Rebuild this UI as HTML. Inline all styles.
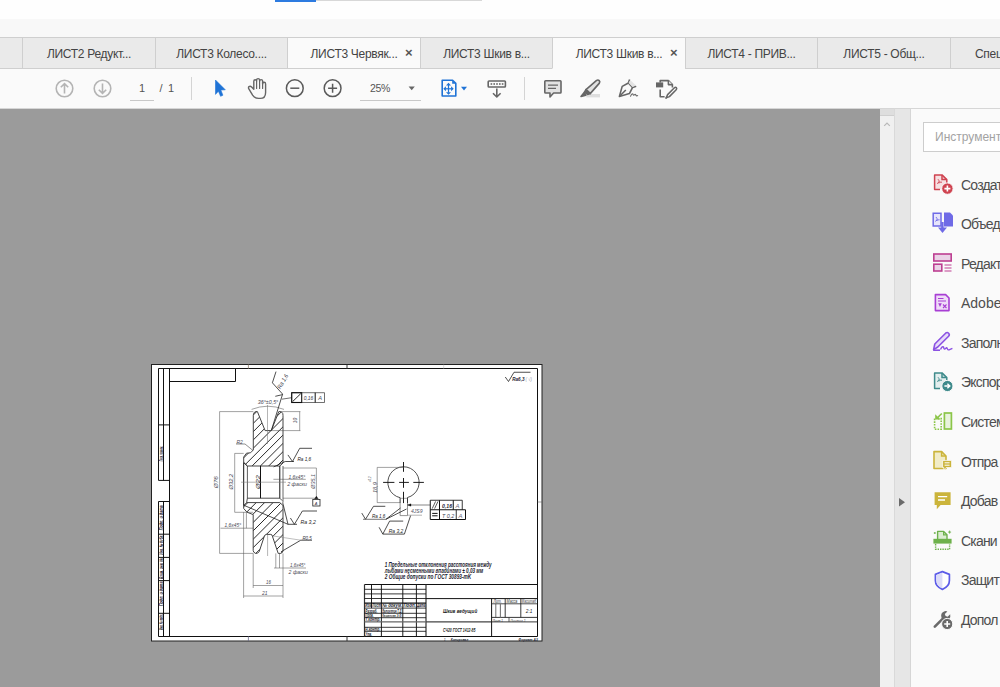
<!DOCTYPE html>
<html><head><meta charset="utf-8">
<style>
*{margin:0;padding:0;box-sizing:border-box}
html,body{width:1000px;height:687px;overflow:hidden;background:#fafafa;font-family:"Liberation Sans",sans-serif;position:relative}
.a{position:absolute}
#topbar{left:0;top:0;width:1000px;height:37px;background:linear-gradient(#fefefe 0,#fefefe 19px,#f8f8f8 19px,#f8f8f8 37px)}
#tabs{left:0;top:37px;width:1000px;height:32px;background:#eaeaea;border-top:1px solid #cfcfcf;border-bottom:1px solid #cfcfcf}
.tab{position:absolute;top:37px;height:32px;letter-spacing:-0.3px;border-left:1px solid #cfcfcf;border-top:1px solid #cfcfcf;border-bottom:1px solid #cfcfcf;background:#eaeaea;font-size:12px;color:#444;line-height:32px;text-align:center;white-space:nowrap;overflow:hidden}
.tab.w{background:#fafafa}
.tab.act{background:#fafafa;border-bottom-color:#fafafa}
.x{position:absolute;top:-1px;font-size:13px;color:#555;font-weight:bold}
#toolbar{left:0;top:69px;width:1000px;height:40px;background:#fafafa}
#doc{left:0;top:108px;width:880px;height:579px;background:#9b9b9b;border-top:1px solid #d6d6d6}
#sb{left:880px;top:108px;width:15px;height:579px;background:#f0f0f0;border-right:1px solid #d9d9d9;border-top:1px solid #d6d6d6}
#div{left:895px;top:108px;width:16px;height:579px;background:#e6e6e6;border-right:1px solid #d6d6d6;border-top:1px solid #d6d6d6}
#pane{left:911px;top:108px;width:89px;height:579px;background:#fafafa;border-top:1px solid #d6d6d6}
.sep{position:absolute;width:1px;background:#d0d0d0}
.lbl{position:absolute;left:961px;font-size:14px;letter-spacing:-0.8px;color:#4e4e4e;white-space:nowrap;line-height:16px}
</style></head><body>
<div class="a" id="topbar"></div>
<div class="a" style="left:275px;top:0;width:41px;height:2px;background:#2d7be0"></div>
<div class="a" style="left:316px;top:0;width:166px;height:1px;background:#d8d8d8"></div>
<div class="a" id="tabs"></div>
<div class="tab" style="left:0;width:22px;border-left:none"></div>
<div class="tab" style="left:22px;width:133px">ЛИСТ2 Редукт...</div>
<div class="tab" style="left:155px;width:132px">ЛИСТ3 Колесо....</div>
<div class="tab w" style="left:287px;width:133px"><span>ЛИСТ3 Червяк...</span><span class="x" style="left:117px">×</span></div>
<div class="tab" style="left:420px;width:132px">ЛИСТ3 Шкив в...</div>
<div class="tab act" style="left:552px;width:133px"><span>ЛИСТ3 Шкив в...</span><span class="x" style="left:117px">×</span></div>
<div class="tab" style="left:685px;width:132px">ЛИСТ4 - ПРИВ...</div>
<div class="tab" style="left:817px;width:133px">ЛИСТ5 - Общ...</div>
<div class="tab" style="left:950px;width:60px;text-align:left;padding-left:24px">Специ</div>

<div class="a" id="toolbar"></div>

<svg class="a" style="left:0;top:0" width="1000" height="108" viewBox="0 0 1000 108">
<g fill="none" stroke="#b4b4b4" stroke-width="1.6">
<circle cx="64.5" cy="88.5" r="8.3"/>
<path d="M64.5 93.5V83.8M60.8 87.3L64.5 83.6L68.2 87.3"/>
<circle cx="102.5" cy="88.5" r="8.3"/>
<path d="M102.5 83.5V93.2M98.8 89.7L102.5 93.4L106.2 89.7"/>
</g>
<rect x="130" y="100" width="24" height="1" fill="#c8c8c8"/>
<rect x="191" y="77" width="1" height="23" fill="#d4d4d4"/>
<path d="M215.5 80L225.3 89.8L220.8 90L222.9 95.2L220.6 96.3L218.4 91.2L215.5 94.4Z" fill="#1f73d6" stroke="#1f73d6" stroke-width="0.6" stroke-linejoin="round"/>
<g fill="none" stroke="#666" stroke-width="1.4" stroke-linejoin="round" stroke-linecap="round">
<path d="M253.8 89.2L251.6 86.9Q250.2 85.6 249 86.6Q248 87.6 249 89.2L252.6 95.2Q254.8 98.4 258.6 98.4L260.2 98.4Q265.6 98.4 265.6 92.4L265.6 84Q265.6 82.3 264.1 82.3Q262.6 82.3 262.6 84L262.6 81Q262.6 79.6 261.1 79.6Q259.6 79.6 259.6 81L259.6 80Q259.6 78.6 258.1 78.6Q256.6 78.6 256.6 80L256.6 81Q256.6 79.8 255.2 79.8Q253.8 79.8 253.8 81.3Z"/>
<path d="M256.6 81V88.5M259.6 80V88.5M262.6 81V88.5" stroke-width="1.2"/>
</g>
<g fill="none" stroke="#5a5a5a" stroke-width="1.5">
<circle cx="294.8" cy="88.2" r="8.4"/>
<path d="M290.3 88.2H299.3"/>
<circle cx="332.6" cy="88.2" r="8.4"/>
<path d="M328.1 88.2H337.1M332.6 83.7V92.7"/>
</g>
<rect x="360" y="100" width="61" height="1" fill="#c8c8c8"/>
<path d="M408.6 86.6H414.8L411.7 90.2Z" fill="#666"/>
<g fill="none" stroke="#1f73d6" stroke-width="1.6" stroke-linejoin="round">
<path d="M442.2 80.2H452.6L455.8 83.4V96H442.2Z"/>
</g>
<path d="M452.2 80.6V83.8H455.4Z" fill="#1f73d6"/>
<g fill="#1f73d6">
<path d="M448.5 82.8L451 85.4H446Z M448.5 94.8L451 92.2H446Z M443.3 88.8L445.9 86.3V91.3Z M453.7 88.8L451.1 86.3V91.3Z"/>
<rect x="447.9" y="85" width="1.2" height="7.6"/><rect x="445.5" y="88.2" width="6" height="1.2"/>
</g>
<path d="M461 86.8H467L464 90.4Z" fill="#1f73d6"/>
<g fill="none" stroke="#666" stroke-width="1.6" stroke-linejoin="round">
<rect x="488.2" y="81" width="17.2" height="6" rx="0.8"/>
<path d="M496.8 88.5V97M493 93.2L496.8 97L500.6 93.2"/>
</g>
<g fill="#666"><rect x="490.6" y="83.2" width="1.6" height="1.6"/><rect x="493.4" y="83.2" width="1.6" height="1.6"/><rect x="496.2" y="83.2" width="1.6" height="1.6"/><rect x="499" y="83.2" width="1.6" height="1.6"/><rect x="501.8" y="83.2" width="1.6" height="1.6"/></g>
<rect x="524" y="77" width="1" height="23" fill="#d4d4d4"/>
<g stroke="#666" stroke-width="1.6" stroke-linejoin="round">
<path d="M545.6 80.8H560.2Q561 80.8 561 81.6V92.2Q561 93 560.2 93H553.6L550 97V93H545.6Q544.8 93 544.8 92.2V81.6Q544.8 80.8 545.6 80.8Z" fill="#e2e2e2"/>
<path d="M548 85.2H558M548 88.3H556" fill="none" stroke-width="1.2"/>
</g>
<rect x="586.3" y="94" width="13.7" height="3.4" fill="#dedede"/>
<g stroke="#666" stroke-width="1.6" stroke-linejoin="round">
<path d="M586 89.6L596.3 80.6Q598 79.4 599.2 80.6Q600.4 81.8 599.2 83.4L590.2 93.6Z" fill="#e2e2e2"/>
<path d="M586 89.6L584.4 92.2L587.6 94.4L590.2 93.6Z" fill="#666"/>
<path d="M584.2 92.6L581 96.4L585.8 95.2Z" fill="#666"/>
</g>
<g stroke="#666" stroke-width="1.6" stroke-linejoin="round" fill="none">
<path d="M629.6 79.4L628.4 83L622.2 86.4L619.4 96.4L629.4 93.6L632.6 87.4L636.2 86.2"/>
<path d="M628.4 83L632.6 87.4"/>
<path d="M619.8 96L625.8 90"/>
</g>
<path d="M630.2 80L636 85.4L632.4 87L628.6 83Z" fill="#e4e4e4"/>
<path d="M630.4 96.6Q632 93 633 94.2Q633.4 96 634.6 94.6Q635.6 93.8 636 95.4Q636.6 96.4 638 95.4" stroke="#666" stroke-width="1.1" fill="none"/>
<g stroke="#666" stroke-width="1.6" fill="none" stroke-linejoin="round">
<path d="M660.2 82.4V80.6H668.4L672.4 84.6V87.6"/>
<path d="M668.4 80.6V84.6H672.4" fill="#fff"/>
<path d="M660.2 89.6V96.8H664.6"/>
</g>
<rect x="656" y="82.4" width="7.2" height="5" fill="#666"/>
<g stroke="#666" stroke-width="1.5" stroke-linejoin="round" fill="none">
<path d="M667.6 94.6L674.4 87.8Q675.6 86.8 676.4 87.8Q677.2 88.8 676.2 89.8L669.4 96.6L666.2 97.8Z"/>
<path d="M666.4 97.6L665.6 98.6" />
</g>
</svg>
<div class="a" style="left:139px;top:82px;font-size:11px;color:#555">1</div>
<div class="a" style="left:159.5px;top:82px;font-size:11px;color:#555">/</div><div class="a" style="left:168px;top:82px;font-size:11px;color:#555">1</div>
<div class="a" style="left:370px;top:82px;font-size:10.5px;letter-spacing:-0.4px;color:#555">25%</div>

<div class="a" id="doc"></div>
<!--DRAWING--><svg class="a" style="left:0;top:0" width="1000" height="687" viewBox="0 0 1000 687" font-family="Liberation Sans, sans-serif"><rect x="151.5" y="364.5" width="390.5" height="276.5" fill="#fff" stroke="#222" stroke-width="1"/>
<path d="M158.50 368.50 L537.50 368.50 L537.50 636.50 L158.50 636.50" stroke="#111" stroke-width="1.0" fill="none" />
<path d="M169.50 368.50 L169.50 636.50" stroke="#111" stroke-width="1.0" fill="none" />
<path d="M158.50 368.50 L158.50 480.40 L169.50 480.40" stroke="#111" stroke-width="1.0" fill="none" />
<path d="M163.50 368.50 L163.50 480.40" stroke="#111" stroke-width="1.0" fill="none" />
<path d="M158.50 424.90 L169.50 424.90" stroke="#111" stroke-width="1.0" fill="none" />
<path d="M169.50 501.50 L158.50 501.50 L158.50 636.50" stroke="#111" stroke-width="1.0" fill="none" />
<path d="M163.50 501.50 L163.50 636.50" stroke="#111" stroke-width="1.0" fill="none" />
<path d="M158.50 534.20 L169.50 534.20" stroke="#111" stroke-width="1.0" fill="none" />
<path d="M158.50 557.40 L169.50 557.40" stroke="#111" stroke-width="1.0" fill="none" />
<path d="M158.50 580.60 L169.50 580.60" stroke="#111" stroke-width="1.0" fill="none" />
<path d="M158.50 613.30 L169.50 613.30" stroke="#111" stroke-width="1.0" fill="none" />
<path d="M169.50 381.50 L235.50 381.50 L235.50 368.50" stroke="#111" stroke-width="1.0" fill="none" />
<path d="M347.00 364.50 L347.00 368.70" stroke="#333" stroke-width="1.0" fill="none" />
<path d="M347.00 636.30 L347.00 641.00" stroke="#333" stroke-width="1.0" fill="none" />
<path d="M248.40 364.50 L248.40 368.70" stroke="#8a7a6a" stroke-width="0.8" fill="none" />
<path d="M248.40 636.30 L248.40 641.00" stroke="#6a6a8a" stroke-width="0.8" fill="none" />
<path d="M443.70 364.50 L443.70 368.70" stroke="#bbb" stroke-width="0.5" fill="none" />
<path d="M537.60 502.00 L542.00 502.00" stroke="#666" stroke-width="0.6" fill="none" />
<path d="M505.25 377.00 L508.50 381.50 L514.00 372.25 L530.50 372.25" stroke="#222" stroke-width="0.8" fill="none" />
<text x="512.2" y="381.4" font-size="5" fill="#223" font-style="italic" font-weight="bold" textLength="12.30" lengthAdjust="spacingAndGlyphs">Ra6,3</text>
<text x="525.5" y="381.4" font-size="5" fill="#99a" font-style="italic" font-weight="normal" textLength="6.50" lengthAdjust="spacingAndGlyphs">( √)</text>
<clipPath id="cu"><path d="M253.3 415.5 L253.6 413.4 L254.6 412.1 L256 411.6 L257.4 411.6 L265.1 430.6 L271.3 430.6 L278.8 411.6 L280.2 411.6 L281.8 412.2 L282.8 413.6 L283 415.5 L283 463 L279.8 466 L247.4 466 L243.7 462.5 L243.7 457 L246.5 453.2 L250.5 452.8 L253.3 450 Z"/></clipPath>
<clipPath id="cl"><path d="M243.7 505.5 L246.6 502.6 L279.8 502.6 L283 505.5 L283 550.8 L282.4 552.4 L280.6 553.4 L278.2 553.4 L272 535 L270.8 534.4 L266.4 534.4 L264.6 535.4 L259.2 551.6 L257.6 553.2 L255.6 553.4 L253.8 552.2 L253.2 550.6 L253.2 514.6 L247 512.2 L243.7 508.5 Z"/></clipPath>
<path clip-path="url(#cu)" d="M77.40 400 L-2.60 480 M85.70 400 L5.70 480 M94.00 400 L14.00 480 M102.30 400 L22.30 480 M110.60 400 L30.60 480 M118.90 400 L38.90 480 M127.20 400 L47.20 480 M135.50 400 L55.50 480 M143.80 400 L63.80 480 M152.10 400 L72.10 480 M160.40 400 L80.40 480 M168.70 400 L88.70 480 M177.00 400 L97.00 480 M185.30 400 L105.30 480 M193.60 400 L113.60 480 M201.90 400 L121.90 480 M210.20 400 L130.20 480 M218.50 400 L138.50 480 M226.80 400 L146.80 480 M235.10 400 L155.10 480 M243.40 400 L163.40 480 M251.70 400 L171.70 480 M260.00 400 L180.00 480 M268.30 400 L188.30 480 M276.60 400 L196.60 480 M284.90 400 L204.90 480 M293.20 400 L213.20 480 M301.50 400 L221.50 480 M309.80 400 L229.80 480 M318.10 400 L238.10 480 M326.40 400 L246.40 480 M334.70 400 L254.70 480 M343.00 400 L263.00 480 M351.30 400 L271.30 480 M359.60 400 L279.60 480 M367.90 400 L287.90 480 M376.20 400 L296.20 480 M384.50 400 L304.50 480 M392.80 400 L312.80 480 M401.10 400 L321.10 480 M409.40 400 L329.40 480 M417.70 400 L337.70 480 M426.00 400 L346.00 480 M434.30 400 L354.30 480 M442.60 400 L362.60 480 M450.90 400 L370.90 480 M459.20 400 L379.20 480 M467.50 400 L387.50 480 M475.80 400 L395.80 480 M484.10 400 L404.10 480 M492.40 400 L412.40 480 M500.70 400 L420.70 480 M509.00 400 L429.00 480 M517.30 400 L437.30 480 M525.60 400 L445.60 480 M533.90 400 L453.90 480 M542.20 400 L462.20 480 M550.50 400 L470.50 480 M558.80 400 L478.80 480 M567.10 400 L487.10 480 M575.40 400 L495.40 480" stroke="#1e1e1e" stroke-width="0.95" fill="none"/>
<path clip-path="url(#cl)" d="M25.20 490 L-54.80 570 M33.60 490 L-46.40 570 M42.00 490 L-38.00 570 M50.40 490 L-29.60 570 M58.80 490 L-21.20 570 M67.20 490 L-12.80 570 M75.60 490 L-4.40 570 M84.00 490 L4.00 570 M92.40 490 L12.40 570 M100.80 490 L20.80 570 M109.20 490 L29.20 570 M117.60 490 L37.60 570 M126.00 490 L46.00 570 M134.40 490 L54.40 570 M142.80 490 L62.80 570 M151.20 490 L71.20 570 M159.60 490 L79.60 570 M168.00 490 L88.00 570 M176.40 490 L96.40 570 M184.80 490 L104.80 570 M193.20 490 L113.20 570 M201.60 490 L121.60 570 M210.00 490 L130.00 570 M218.40 490 L138.40 570 M226.80 490 L146.80 570 M235.20 490 L155.20 570 M243.60 490 L163.60 570 M252.00 490 L172.00 570 M260.40 490 L180.40 570 M268.80 490 L188.80 570 M277.20 490 L197.20 570 M285.60 490 L205.60 570 M294.00 490 L214.00 570 M302.40 490 L222.40 570 M310.80 490 L230.80 570 M319.20 490 L239.20 570 M327.60 490 L247.60 570 M336.00 490 L256.00 570 M344.40 490 L264.40 570 M352.80 490 L272.80 570 M361.20 490 L281.20 570 M369.60 490 L289.60 570 M378.00 490 L298.00 570 M386.40 490 L306.40 570 M394.80 490 L314.80 570 M403.20 490 L323.20 570 M411.60 490 L331.60 570 M420.00 490 L340.00 570 M428.40 490 L348.40 570 M436.80 490 L356.80 570 M445.20 490 L365.20 570 M453.60 490 L373.60 570 M462.00 490 L382.00 570 M470.40 490 L390.40 570 M478.80 490 L398.80 570 M487.20 490 L407.20 570 M495.60 490 L415.60 570 M504.00 490 L424.00 570 M512.40 490 L432.40 570 M520.80 490 L440.80 570 M529.20 490 L449.20 570" stroke="#1e1e1e" stroke-width="0.95" fill="none"/>
<path d="M253.30 415.50 L253.60 413.40 L254.60 412.10 L256.00 411.60 L257.40 411.60 L265.10 430.60 L271.30 430.60 L278.80 411.60 L280.20 411.60 L281.80 412.20 L282.80 413.60 L283.00 415.50 L283.00 463.00 L279.80 466.00 L247.40 466.00 L243.70 462.50 L243.70 457.00 L246.50 453.20 L250.50 452.80 L253.30 450.00 Z" stroke="#444" stroke-width="1.0" fill="none" />
<path d="M243.70 505.50 L246.60 502.60 L279.80 502.60 L283.00 505.50 L283.00 550.80 L282.40 552.40 L280.60 553.40 L278.20 553.40 L272.00 535.00 L270.80 534.40 L266.40 534.40 L264.60 535.40 L259.20 551.60 L257.60 553.20 L255.60 553.40 L253.80 552.20 L253.20 550.60 L253.20 514.60 L247.00 512.20 L243.70 508.50 Z" stroke="#444" stroke-width="1.0" fill="none" />
<path d="M283.00 466.00 L283.00 502.60" stroke="#444" stroke-width="0.8" fill="none" />
<path d="M279.80 466.00 L279.80 498.20" stroke="#111" stroke-width="1.0" fill="none" />
<path d="M247.40 466.00 L247.40 498.20" stroke="#333" stroke-width="0.8" fill="none" />
<path d="M243.70 462.50 L243.70 505.50" stroke="#111" stroke-width="1.0" fill="none" />
<path d="M260.50 466.00 L260.50 498.20" stroke="#111" stroke-width="1.0" fill="none" />
<path d="M246.60 502.60 L247.40 498.20 L279.80 498.20 L282.20 500.60" stroke="#222" stroke-width="0.8" fill="none" />
<path d="M243.70 462.50 L247.40 466.00" stroke="#222" stroke-width="0.8" fill="none" />
<path d="M267.50 405.00 L267.50 444.00" stroke="#777" stroke-width="0.55" fill="none" />
<path d="M267.60 534.60 L267.60 556.00" stroke="#777" stroke-width="0.55" fill="none" />
<path d="M241.00 482.20 L286.00 482.20" stroke="#777" stroke-width="0.55" fill="none" />
<path d="M219.60 411.60 L253.30 411.60" stroke="#555" stroke-width="0.55" fill="none" />
<path d="M219.60 411.60 L219.60 553.40" stroke="#555" stroke-width="0.55" fill="none" />
<path d="M219.60 553.40 L253.20 553.40" stroke="#555" stroke-width="0.55" fill="none" />
<text x="215.8" y="484.36" font-size="6.0" fill="#4a4a55" font-style="italic" font-weight="normal" text-anchor="middle" textLength="12" lengthAdjust="spacingAndGlyphs" transform="rotate(-90 215.8 482.2)">Ø76</text>
<path d="M234.70 453.40 L243.70 453.40" stroke="#555" stroke-width="0.55" fill="none" />
<path d="M234.70 453.40 L234.70 512.30" stroke="#555" stroke-width="0.55" fill="none" />
<path d="M234.70 512.30 L253.20 512.30" stroke="#555" stroke-width="0.55" fill="none" />
<text x="230.8" y="483.76" font-size="6.0" fill="#4a4a55" font-style="italic" font-weight="normal" text-anchor="middle" textLength="15.6" lengthAdjust="spacingAndGlyphs" transform="rotate(-90 230.8 481.6)">Ø32,2</text>
<text x="257.5" y="484.16" font-size="6.0" fill="#222" font-style="italic" font-weight="normal" text-anchor="middle" textLength="13.8" lengthAdjust="spacingAndGlyphs" transform="rotate(-90 257.5 482)">Ø22</text>
<path d="M236.00 444.00 L245.00 444.00 L253.00 450.50" stroke="#333" stroke-width="0.55" fill="none" />
<text x="236.5" y="444.4" font-size="6.0" fill="#4a4a55" font-style="italic" font-weight="normal" textLength="6.30" lengthAdjust="spacingAndGlyphs">R2</text>
<path d="M280.00 411.60 L300.40 411.60" stroke="#555" stroke-width="0.55" fill="none" />
<path d="M271.30 430.60 L300.40 430.60" stroke="#555" stroke-width="0.55" fill="none" />
<path d="M299.70 411.60 L299.70 430.60" stroke="#555" stroke-width="0.55" fill="none" />
<text x="294.4" y="422.66" font-size="6.0" fill="#4a4a55" font-style="italic" font-weight="normal" text-anchor="middle" textLength="5.4" lengthAdjust="spacingAndGlyphs" transform="rotate(-90 294.4 420.5)">10</text>
<path d="M251.6 409.4 Q267.7 403 284 409.4" stroke="#555" stroke-width="0.55" fill="none" />
<text x="257.8" y="404.2" font-size="6.0" fill="#4a4a55" font-style="italic" font-weight="normal" textLength="20.40" lengthAdjust="spacingAndGlyphs">36°±0,5°</text>
<path d="M276.00 371.60 L272.40 382.80 L282.60 394.10 L271.30 430.60" stroke="#222" stroke-width="0.8" fill="none" />
<path d="M275.30 396.30 L282.60 394.60" stroke="#222" stroke-width="0.8" fill="none" />
<text x="282.6" y="383.56" font-size="6.0" fill="#3a3a48" font-style="italic" font-weight="normal" text-anchor="middle" textLength="16" lengthAdjust="spacingAndGlyphs" transform="rotate(-60 282.6 381.4)">Ra 1,6</text>
<path d="M281.80 399.20 L291.70 397.70" stroke="#333" stroke-width="0.7" fill="none" />
<path d="M291.70 392.70 L324.50 392.70 L324.50 402.50 L291.70 402.50 Z" stroke="#333" stroke-width="0.7" fill="none" />
<rect x="291.7" y="392.7" width="10" height="9.8" fill="none" stroke="#111" stroke-width="1.1"/>
<path d="M292.60 401.60 L300.80 393.60" stroke="#111" stroke-width="0.9" fill="none" />
<path d="M315.20 392.70 L315.20 402.50" stroke="#111" stroke-width="1.0" fill="none" />
<text x="303.8" y="400.2" font-size="6.0" fill="#3a3a48" font-style="italic" font-weight="normal" textLength="9.50" lengthAdjust="spacingAndGlyphs">0,16</text>
<text x="318.2" y="400.2" font-size="6.0" fill="#4a4a55" font-style="italic" font-weight="normal" textLength="3.80" lengthAdjust="spacingAndGlyphs">A</text>
<path d="M287.90 454.90 L292.50 461.50 L299.70 448.30 L312.00 448.30" stroke="#222" stroke-width="0.8" fill="none" />
<path d="M273.60 466.90 L285.20 461.50 L294.00 461.50" stroke="#222" stroke-width="0.8" fill="none" />
<text x="297.4" y="460.6" font-size="6.0" fill="#1a1a1a" font-style="italic" font-weight="normal" textLength="13.80" lengthAdjust="spacingAndGlyphs">Ra 1,6</text>
<path d="M283.00 468.00 L316.40 468.00" stroke="#555" stroke-width="0.55" fill="none" />
<path d="M283.00 498.20 L316.40 498.20" stroke="#555" stroke-width="0.55" fill="none" />
<path d="M316.40 468.00 L316.40 498.20" stroke="#555" stroke-width="0.55" fill="none" />
<text x="312.7" y="483.46" font-size="6.0" fill="#4a4a55" font-style="italic" font-weight="normal" text-anchor="middle" textLength="15" lengthAdjust="spacingAndGlyphs" transform="rotate(-90 312.7 481.3)">Ø35,1</text>
<path d="M314.6 498.8 L316.4 496.2 L318.2 498.8 Z" stroke="#111" stroke-width="0.4" fill="#111" />
<rect x="312.8" y="499.5" width="7.2" height="6.5" fill="#fff" stroke="#222" stroke-width="0.8"/>
<text x="314.8" y="504.8" font-size="4" fill="#334" font-style="italic" font-weight="normal" text-anchor="start" >A</text>
<path d="M273.40 479.30 L305.80 479.30" stroke="#555" stroke-width="0.55" fill="none" />
<text x="288.4" y="478.6" font-size="6.0" fill="#4a4a55" font-style="italic" font-weight="normal" textLength="16.80" lengthAdjust="spacingAndGlyphs">1,6x45°</text>
<text x="287.2" y="485.8" font-size="6.0" fill="#4a4a55" font-style="italic" font-weight="normal" textLength="19.80" lengthAdjust="spacingAndGlyphs">2 фаски</text>
<path d="M290.40 518.00 L294.40 524.30 L302.40 511.00 L317.00 511.00" stroke="#222" stroke-width="0.8" fill="none" />
<path d="M243.70 505.20 L288.00 524.30 L297.00 524.30" stroke="#222" stroke-width="0.8" fill="none" />
<path d="M282.70 502.60 L288.00 524.30" stroke="#222" stroke-width="0.8" fill="none" />
<text x="300.6" y="523.7" font-size="6.0" fill="#1a1a1a" font-style="italic" font-weight="normal" textLength="15.20" lengthAdjust="spacingAndGlyphs">Ra 3,2</text>
<path d="M281.00 551.80 L300.80 540.20 L312.00 540.20" stroke="#222" stroke-width="0.8" fill="none" />
<path d="M272.00 535.80 L300.80 540.20" stroke="#888" stroke-width="0.55" fill="none" />
<text x="302.4" y="539.6" font-size="6.0" fill="#3a3a48" font-style="italic" font-weight="normal" textLength="9.30" lengthAdjust="spacingAndGlyphs">R0,5</text>
<path d="M220.50 528.20 L253.20 528.20" stroke="#555" stroke-width="0.55" fill="none" />
<path d="M246.40 512.20 L246.40 528.20" stroke="#555" stroke-width="0.55" fill="none" />
<text x="224.5" y="527.1" font-size="6.0" fill="#4a4a55" font-style="italic" font-weight="normal" textLength="16.60" lengthAdjust="spacingAndGlyphs">1,6x45°</text>
<path d="M274.00 568.00 L306.00 568.00" stroke="#555" stroke-width="0.55" fill="none" />
<path d="M279.50 553.40 L279.50 568.00" stroke="#555" stroke-width="0.55" fill="none" />
<path d="M275.80 553.40 L275.80 568.00" stroke="#555" stroke-width="0.55" fill="none" />
<text x="290" y="566.5" font-size="6.0" fill="#4a4a55" font-style="italic" font-weight="normal" textLength="15.40" lengthAdjust="spacingAndGlyphs">1,6x45°</text>
<text x="288.6" y="574.2" font-size="6.0" fill="#4a4a55" font-style="italic" font-weight="normal" textLength="19.30" lengthAdjust="spacingAndGlyphs">2 фаски</text>
<path d="M253.20 553.40 L253.20 588.00" stroke="#555" stroke-width="0.55" fill="none" />
<path d="M243.60 512.20 L243.60 598.00" stroke="#555" stroke-width="0.55" fill="none" />
<path d="M283.00 553.40 L283.00 598.00" stroke="#555" stroke-width="0.55" fill="none" />
<path d="M253.20 585.50 L283.00 585.50" stroke="#555" stroke-width="0.55" fill="none" />
<path d="M243.60 596.00 L283.00 596.00" stroke="#555" stroke-width="0.55" fill="none" />
<text x="266" y="583.6" font-size="6.0" fill="#4a4a55" font-style="italic" font-weight="normal" textLength="4.90" lengthAdjust="spacingAndGlyphs">16</text>
<text x="261.9" y="594.9" font-size="6.0" fill="#4a4a55" font-style="italic" font-weight="normal" textLength="5.50" lengthAdjust="spacingAndGlyphs">21</text>
<path d="M400.10 497.68 A15.65 15.65 0 1 1 407.50 497.53" stroke="#333" stroke-width="0.85" fill="none" />
<path d="M400.10 497.68 L400.10 503.00" stroke="#222" stroke-width="0.9" fill="none" />
<path d="M407.50 497.53 L407.50 503.00" stroke="#222" stroke-width="0.9" fill="none" />
<path d="M400.10 503.00 L400.10 515.60 L407.50 515.60 L407.50 503.00" stroke="#777" stroke-width="0.8" fill="none" />
<path d="M400.10 498.30 L407.50 498.30" stroke="#666" stroke-width="0.6" fill="none" />
<path d="M383.10 482.40 L394.40 482.40" stroke="#111" stroke-width="0.95" fill="none" />
<path d="M399.10 482.40 L408.90 482.40" stroke="#111" stroke-width="0.95" fill="none" />
<path d="M413.30 482.40 L423.90 482.40" stroke="#111" stroke-width="0.95" fill="none" />
<path d="M403.50 462.00 L403.50 471.80" stroke="#111" stroke-width="0.95" fill="none" />
<path d="M403.50 478.00 L403.50 487.80" stroke="#111" stroke-width="0.95" fill="none" />
<path d="M403.50 491.80 L403.50 503.10" stroke="#111" stroke-width="0.95" fill="none" />
<path d="M377.20 467.40 L403.60 467.40" stroke="#555" stroke-width="0.55" fill="none" />
<path d="M377.20 502.60 L400.10 502.60" stroke="#555" stroke-width="0.55" fill="none" />
<path d="M377.20 467.40 L377.20 502.60" stroke="#555" stroke-width="0.55" fill="none" />
<text x="374.5" y="489.76" font-size="6.0" fill="#4a4a55" font-style="italic" font-weight="normal" text-anchor="middle" textLength="11" lengthAdjust="spacingAndGlyphs" transform="rotate(-90 374.5 487.6)">18,9</text>
<text x="369.5" y="480.71" font-size="4.2" fill="#4a4a55" font-style="italic" font-weight="normal" text-anchor="middle" textLength="5.8" lengthAdjust="spacingAndGlyphs" transform="rotate(-90 369.5 479.2)">+0,2</text>
<path d="M407.50 505.00 L430.25 505.00" stroke="#333" stroke-width="0.6" fill="none" />
<path d="M407.6 505 L411 503.8 L411 506.2 Z" stroke="#111" stroke-width="0.3" fill="#111" />
<path d="M407.50 515.20 L422.00 515.20" stroke="#777" stroke-width="0.55" fill="none" />
<text x="410.9" y="513" font-size="6.0" fill="#556" font-style="italic" font-weight="normal" textLength="11.60" lengthAdjust="spacingAndGlyphs">4JS9</text>
<path d="M361.80 513.10 L365.50 519.30 L373.50 506.30 L385.30 506.30" stroke="#222" stroke-width="0.8" fill="none" />
<path d="M363.00 519.30 L385.90 519.30" stroke="#555" stroke-width="0.8" fill="none" />
<path d="M385.90 519.30 L400.50 508.00" stroke="#222" stroke-width="0.8" fill="none" />
<path d="M385.90 519.30 L406.50 509.00" stroke="#222" stroke-width="0.8" fill="none" />
<text x="371.9" y="518.2" font-size="6.0" fill="#1a1a1a" font-style="italic" font-weight="normal" textLength="13.40" lengthAdjust="spacingAndGlyphs">Ra 1,6</text>
<path d="M379.10 527.30 L382.80 534.10 L389.60 521.10 L403.20 521.10" stroke="#222" stroke-width="0.8" fill="none" />
<path d="M382.80 534.10 L404.40 534.10 L410.60 515.60" stroke="#222" stroke-width="0.8" fill="none" />
<text x="388.8" y="532.8" font-size="6.0" fill="#1a1a1a" font-style="italic" font-weight="normal" textLength="14.50" lengthAdjust="spacingAndGlyphs">Ra 3,2</text>
<path d="M430.25 500.25 L462.25 500.25 L462.25 509.75" stroke="#222" stroke-width="0.9" fill="none" />
<path d="M430.25 500.25 L430.25 519.50 L465.50 519.50 L465.50 509.75 L430.25 509.75" stroke="#111" stroke-width="1.0" fill="none" />
<path d="M439.50 500.25 L439.50 519.50" stroke="#111" stroke-width="1.0" fill="none" />
<path d="M453.25 500.25 L453.25 509.75" stroke="#111" stroke-width="1.0" fill="none" />
<path d="M456.25 509.75 L456.25 519.50" stroke="#222" stroke-width="0.9" fill="none" />
<path d="M432.20 508.60 L435.60 501.40" stroke="#333" stroke-width="0.8" fill="none" />
<path d="M434.60 508.60 L438.00 501.40" stroke="#333" stroke-width="0.8" fill="none" />
<path d="M432.20 513.40 L437.60 513.40" stroke="#111" stroke-width="1.0" fill="none" />
<path d="M432.20 515.80 L437.60 515.80" stroke="#111" stroke-width="1.0" fill="none" />
<text x="442" y="508.4" font-size="6" fill="#223" font-style="italic" font-weight="bold" textLength="10.00" lengthAdjust="spacingAndGlyphs">0,16</text>
<text x="455.6" y="508.4" font-size="6" fill="#667" font-style="italic" font-weight="normal" textLength="4.00" lengthAdjust="spacingAndGlyphs">A</text>
<text x="442" y="518.2" font-size="6" fill="#445" font-style="italic" font-weight="normal" textLength="12.20" lengthAdjust="spacingAndGlyphs">T 0,2</text>
<text x="458.6" y="518.2" font-size="6" fill="#667" font-style="italic" font-weight="normal" textLength="4.00" lengthAdjust="spacingAndGlyphs">A</text>
<text x="384.8" y="566.7" font-size="6.4" fill="#1c1c30" font-style="italic" font-weight="bold" textLength="106.80" lengthAdjust="spacingAndGlyphs">1 Предельные отклонения расстояния между</text>
<text x="384.8" y="572.6" font-size="6.4" fill="#1c1c30" font-style="italic" font-weight="bold" textLength="98.40" lengthAdjust="spacingAndGlyphs">лыбами несменными впадинами ± 0,03 мм</text>
<text x="384.8" y="578.7" font-size="6.4" fill="#1c1c30" font-style="italic" font-weight="bold" textLength="86.40" lengthAdjust="spacingAndGlyphs">2 Общие допуски по ГОСТ 30893-mK</text>
<path d="M364.50 584.50 L537.50 584.50" stroke="#111" stroke-width="1.0" fill="none" />
<path d="M364.50 584.50 L364.50 636.50" stroke="#333" stroke-width="1.2" fill="none" />
<path d="M381.40 584.50 L381.40 636.50" stroke="#111" stroke-width="0.95" fill="none" />
<path d="M402.80 584.50 L402.80 636.50" stroke="#111" stroke-width="0.95" fill="none" />
<path d="M416.40 584.50 L416.40 636.50" stroke="#111" stroke-width="0.95" fill="none" />
<path d="M371.50 584.50 L371.50 608.10" stroke="#111" stroke-width="0.95" fill="none" />
<path d="M426.00 584.50 L426.00 636.50" stroke="#333" stroke-width="1.2" fill="none" />
<path d="M364.50 589.30 L426.00 589.30" stroke="#151515" stroke-width="0.85" fill="none" />
<path d="M364.50 593.90 L426.00 593.90" stroke="#151515" stroke-width="0.85" fill="none" />
<path d="M364.50 598.50 L426.00 598.50" stroke="#151515" stroke-width="0.85" fill="none" />
<path d="M364.50 608.10 L426.00 608.10" stroke="#151515" stroke-width="0.85" fill="none" />
<path d="M364.50 613.30 L426.00 613.30" stroke="#151515" stroke-width="0.85" fill="none" />
<path d="M364.50 617.70 L426.00 617.70" stroke="#151515" stroke-width="0.85" fill="none" />
<path d="M364.50 627.30 L426.00 627.30" stroke="#151515" stroke-width="0.85" fill="none" />
<path d="M364.50 631.30 L426.00 631.30" stroke="#151515" stroke-width="0.85" fill="none" />
<path d="M364.50 603.10 L426.00 603.10" stroke="#111" stroke-width="1.1" fill="none" />
<path d="M364.50 621.80 L426.00 621.80" stroke="#666" stroke-width="1.2" fill="none" />
<path d="M426.00 598.60 L537.50 598.60" stroke="#111" stroke-width="1.0" fill="none" />
<path d="M426.00 621.90 L491.60 621.90" stroke="#444" stroke-width="1.1" fill="none" />
<path d="M491.60 598.60 L491.60 636.50" stroke="#111" stroke-width="1.0" fill="none" />
<path d="M491.60 603.80 L537.50 603.80" stroke="#222" stroke-width="0.8" fill="none" />
<path d="M491.60 617.40 L537.50 617.40" stroke="#222" stroke-width="0.9" fill="none" />
<path d="M491.60 621.90 L537.50 621.90" stroke="#222" stroke-width="0.9" fill="none" />
<path d="M495.80 603.80 L495.80 617.40" stroke="#333" stroke-width="0.7" fill="none" />
<path d="M500.40 603.80 L500.40 617.40" stroke="#777" stroke-width="1.1" fill="none" />
<path d="M505.20 598.60 L505.20 617.40" stroke="#222" stroke-width="0.9" fill="none" />
<path d="M520.80 598.60 L520.80 617.40" stroke="#222" stroke-width="0.9" fill="none" />
<path d="M509.00 617.40 L509.00 621.90" stroke="#333" stroke-width="0.8" fill="none" />
<text x="493.4" y="603.2" font-size="4.6" fill="#333" font-style="italic" font-weight="normal" textLength="8.40" lengthAdjust="spacingAndGlyphs">Лит.</text>
<text x="506.6" y="603.2" font-size="4.6" fill="#333" font-style="italic" font-weight="normal" textLength="10.80" lengthAdjust="spacingAndGlyphs">Масса</text>
<text x="521.6" y="603.2" font-size="4.6" fill="#333" font-style="italic" font-weight="normal" textLength="14.40" lengthAdjust="spacingAndGlyphs">Масштаб</text>
<text x="525.8" y="613.2" font-size="6.2" fill="#222" font-style="italic" font-weight="normal" textLength="6.60" lengthAdjust="spacingAndGlyphs">2:1</text>
<text x="492.8" y="621.5" font-size="4.4" fill="#333" font-style="italic" font-weight="normal" textLength="10.20" lengthAdjust="spacingAndGlyphs">Лист 1</text>
<text x="510.2" y="621.5" font-size="4.4" fill="#555" font-style="italic" font-weight="normal" textLength="15.60" lengthAdjust="spacingAndGlyphs">Листов 1</text>
<text x="443" y="613.2" font-size="6.2" fill="#1a1a1a" font-style="italic" font-weight="bold" textLength="34.20" lengthAdjust="spacingAndGlyphs">Шкив ведущий</text>
<text x="443" y="631.8" font-size="5.4" fill="#1a1a1a" font-style="italic" font-weight="bold" textLength="32.40" lengthAdjust="spacingAndGlyphs">СЧ20 ГОСТ 1412-85</text>
<text x="365.3" y="607.4" font-size="4.6" fill="#1a1a2a" font-style="italic" font-weight="bold" textLength="15.70" lengthAdjust="spacingAndGlyphs">Изм Лист</text>
<text x="382.2" y="607.4" font-size="4.6" fill="#1a1a2a" font-style="italic" font-weight="bold" textLength="20.00" lengthAdjust="spacingAndGlyphs">№ докум.</text>
<text x="403.4" y="607.4" font-size="4.6" fill="#1a1a2a" font-style="italic" font-weight="bold" textLength="12.40" lengthAdjust="spacingAndGlyphs">Подп.</text>
<text x="416.9" y="607.4" font-size="4.6" fill="#1a1a2a" font-style="italic" font-weight="bold" textLength="8.70" lengthAdjust="spacingAndGlyphs">Дата</text>
<text x="365.3" y="612.5" font-size="4.6" fill="#1a1a2a" font-style="italic" font-weight="bold" textLength="12.20" lengthAdjust="spacingAndGlyphs">Разраб.</text>
<text x="382.2" y="612.5" font-size="4.6" fill="#1a1a2a" font-style="italic" font-weight="bold" textLength="20.00" lengthAdjust="spacingAndGlyphs">Валиуллин Т.Д.</text>
<text x="365.3" y="617.2" font-size="4.6" fill="#1a1a2a" font-style="italic" font-weight="bold" textLength="8.20" lengthAdjust="spacingAndGlyphs">Пров.</text>
<text x="382.2" y="617.2" font-size="4.2" fill="#444" font-style="italic" font-weight="bold" textLength="20.00" lengthAdjust="spacingAndGlyphs">Кашапова Э.Ф.</text>
<text x="365.3" y="621.4" font-size="4.6" fill="#1a1a2a" font-style="italic" font-weight="bold" textLength="15.00" lengthAdjust="spacingAndGlyphs">Т.контр.</text>
<text x="365.3" y="630.8" font-size="4.6" fill="#1a1a2a" font-style="italic" font-weight="bold" textLength="15.00" lengthAdjust="spacingAndGlyphs">Н.контр.</text>
<text x="365.3" y="635.6" font-size="4.6" fill="#1a1a2a" font-style="italic" font-weight="bold" textLength="6.70" lengthAdjust="spacingAndGlyphs">Утв.</text>
<text x="444" y="640.6" font-size="3.8" fill="#223" font-style="italic" font-weight="normal" textLength="1.60" lengthAdjust="spacingAndGlyphs">1</text>
<text x="450.8" y="640.6" font-size="3.8" fill="#223" font-style="italic" font-weight="bold" textLength="17.40" lengthAdjust="spacingAndGlyphs">Копировал</text>
<text x="518.6" y="640.6" font-size="3.8" fill="#223" font-style="italic" font-weight="bold" textLength="19.20" lengthAdjust="spacingAndGlyphs">Формат A3</text>
<text x="161.3" y="455.57" font-size="5.2" fill="#112" font-style="italic" font-weight="bold" text-anchor="middle" textLength="15" lengthAdjust="spacingAndGlyphs" transform="rotate(-90 161.3 453.7)">Перв. примен.</text>
<text x="161.3" y="519.67" font-size="5.2" fill="#112" font-style="italic" font-weight="bold" text-anchor="middle" textLength="25" lengthAdjust="spacingAndGlyphs" transform="rotate(-90 161.3 517.8)">Подп. и дата</text>
<text x="161.3" y="546.67" font-size="5.2" fill="#112" font-style="italic" font-weight="bold" text-anchor="middle" textLength="20" lengthAdjust="spacingAndGlyphs" transform="rotate(-90 161.3 544.8)">Инв. № дубл.</text>
<text x="161.3" y="570.37" font-size="5.2" fill="#112" font-style="italic" font-weight="bold" text-anchor="middle" textLength="21" lengthAdjust="spacingAndGlyphs" transform="rotate(-90 161.3 568.5)">Взам. инв. №</text>
<text x="161.3" y="595.67" font-size="5.2" fill="#112" font-style="italic" font-weight="bold" text-anchor="middle" textLength="24.5" lengthAdjust="spacingAndGlyphs" transform="rotate(-90 161.3 593.8)">Подп. и дата</text>
<text x="161.3" y="623.87" font-size="5.2" fill="#112" font-style="italic" font-weight="bold" text-anchor="middle" textLength="16" lengthAdjust="spacingAndGlyphs" transform="rotate(-90 161.3 622)">Инв. № подл.</text></svg><!--/DRAWING-->
<div class="a" id="sb"></div>
<div class="a" id="div"></div>
<div class="a" id="pane"></div>

<svg class="a" style="left:870px;top:108px" width="130" height="579" viewBox="870 108 130 579">
<rect x="880" y="109" width="14" height="6" fill="#dedede"/>
<rect x="880" y="115" width="14" height="1" fill="#cfcfcf"/>
<path d="M884.2 125.8L887 123L889.8 125.8" fill="none" stroke="#b8b8b8" stroke-width="1.2"/>
<path d="M899 498L905 502.3L899 506.6Z" fill="#6a6a6a"/>
<rect x="923.5" y="122.5" width="90" height="29" fill="#fff" stroke="#cdcdcd"/>
<!-- create -->
<path d="M946.8 184V179.6L942 174.9H934.6V189.6H940" fill="#f6e0e2" stroke="#cf4350" stroke-width="1.5" stroke-linejoin="round"/>
<path d="M942 174.9V179.6H946.8" stroke="#cf4350" stroke-width="1.5" fill="none"/>
<path d="M938 179.2Q939.6 180.2 939 183.4M937 183.6Q939.2 181.4 942 182.2" stroke="#cf4350" stroke-width="0.9" fill="none"/>
<circle cx="947.4" cy="188.6" r="5.7" fill="#cf4350" stroke="#fafafa" stroke-width="1"/>
<path d="M944.4 188.6H950.4M947.4 185.6V191.6" stroke="#fff" stroke-width="1.6"/>
<!-- combine -->
<g fill="#6f6ae6">
<path d="M944 212.5H950L953 215.5V226.5H944Z"/>
</g>
<path d="M933.2 213.2H941V226H933.2Z" fill="#e6e4fb" stroke="#6f6ae6" stroke-width="1.5"/>
<path d="M936 217Q937.5 218 937 221M935.2 221.4Q937.2 219.3 939.6 219.8" stroke="#6f6ae6" stroke-width="0.9" fill="none"/>
<rect x="941.2" y="222" width="2.4" height="6" fill="#6f6ae6"/>
<path d="M938 227.5H947L942.5 233Z" fill="#6f6ae6"/>
<!-- edit -->
<rect x="933.8" y="254" width="17.4" height="7" fill="#ead3e7" stroke="#bd3f92" stroke-width="1.6"/>
<rect x="933.8" y="264.2" width="8" height="6.8" fill="#ead3e7" stroke="#bd3f92" stroke-width="1.6"/>
<path d="M944.5 265H951.5M944.5 268H951.5M944.5 271H951.5" stroke="#bd3f92" stroke-width="1.2"/>
<!-- sign -->
<path d="M935.4 294.6H945.6L949 298V310.6H935.4Z" fill="#efdcf8" stroke="#a83fd4" stroke-width="1.6" stroke-linejoin="round"/>
<path d="M938 298.5H943.5M938 301H946" stroke="#a83fd4" stroke-width="1.2"/>
<path d="M938.2 303.2H941.8L940 307Z" fill="#a83fd4"/>
<path d="M943 304.5L946.5 308M946.5 304.5L943 308" stroke="#a83fd4" stroke-width="1.1"/>
<!-- fill & sign -->
<path d="M933.6 349.6L934.8 344L945.6 333.2Q947.2 331.8 948.6 333.2Q950 334.6 948.6 336.2L937.8 347Z" fill="#e7dcf9" stroke="#8b52e2" stroke-width="1.6" stroke-linejoin="round"/>
<path d="M933.2 350.2H940" stroke="#8b52e2" stroke-width="1.6"/>
<path d="M940.5 349.5Q942.5 345.5 943.6 347.2Q944 350.2 945.6 348.6Q946.8 346.8 947.4 348.8Q948 350.4 949.6 349.6L952.4 348.4" stroke="#8b52e2" stroke-width="1.4" fill="none"/>
<!-- export -->
<path d="M946.8 383V377.6L942 372.9H934.6V388.6H940" fill="#e3eeee" stroke="#3e8a8b" stroke-width="1.5" stroke-linejoin="round"/>
<path d="M942 372.9V377.6H946.8" stroke="#3e8a8b" stroke-width="1.5" fill="none"/>
<path d="M938 377.2Q939.6 378.2 939 381.4M937 381.6Q939.2 379.4 942 380.2" stroke="#3e8a8b" stroke-width="0.9" fill="none"/>
<circle cx="947.4" cy="386" r="5.6" fill="#3e8a8b" stroke="#fafafa" stroke-width="1"/>
<path d="M944.4 386H949.2M947.4 383.8L949.8 386L947.4 388.2" stroke="#fff" stroke-width="1.4" fill="none"/>
<!-- organize -->
<rect x="944.4" y="413" width="7" height="16" fill="#e8f3dc" stroke="#8bc548" stroke-width="1.7"/>
<path d="M934.6 418.6V429.2H941.2V418.6H938" stroke="#8bc548" stroke-width="1.6" stroke-dasharray="1.6 1.1" fill="none"/>
<path d="M941.8 413.5L936.5 418.8" stroke="#8bc548" stroke-width="1.6"/>
<path d="M935.2 414.2V419.6H940.6Z" fill="#8bc548"/>
<!-- send for comments -->
<path d="M934 451.6H941.6L946 456V468.5H934Z" fill="#f1ecc7" stroke="#cbb43b" stroke-width="1.6" stroke-linejoin="round"/>
<path d="M941.6 451.6V456H946" stroke="#cbb43b" stroke-width="1.5" fill="none"/>
<path d="M942.6 460.4H951.6V467.6H946L943.8 470V467.6H942.6Z" fill="#cbb43b" stroke="#fafafa" stroke-width="0.8"/>
<path d="M944.6 462.8H949.6M944.6 465.2H949.6" stroke="#fff" stroke-width="1"/>
<!-- comment -->
<path d="M934.6 492.2H950.6V505H940.6L936.8 509.2V505H934.6Z" fill="#cbb43b"/>
<path d="M938 496.6H947.2M938 500H945" stroke="#fff" stroke-width="1.4"/>
<!-- scan -->
<path d="M937.6 540V531.4H943.6L947 534.8V540" fill="#dcedd2" stroke="#6db14b" stroke-width="1.4" stroke-linejoin="round"/>
<path d="M943.6 531.4V534.8H947" fill="none" stroke="#6db14b" stroke-width="1.2"/>
<path d="M933.4 538.8H951.6V543.6H933.4Z" fill="#6db14b"/>
<path d="M935.6 544V549.2H949.6V544" stroke="#6db14b" stroke-width="1.4" stroke-dasharray="1.4 1" fill="none"/>
<path d="M949.6 530.6V533.6M948.1 532.1H951.1M934.8 532V534M933.8 533H935.8" stroke="#6db14b" stroke-width="0.9"/>
<!-- protect -->
<path d="M942.4 571.6L949.4 574.4V580.6Q949.4 586.6 942.4 589.4Q935.4 586.6 935.4 580.6V574.4Z" fill="#fff" stroke="#5c5ce8" stroke-width="1.7" stroke-linejoin="round"/>
<path d="M942.4 572.6V588.4Q936.4 586 936.4 580.6V575Z" fill="#dcdcf8"/>
<!-- more tools -->
<path d="M934.8 626.6L942.6 618.8" stroke="#6a6a6a" stroke-width="2.6" stroke-linecap="round"/>
<path d="M941.4 617.4Q940.2 612.6 944.6 611.2Q946.2 610.8 947.4 611.4L944.8 614L945.6 616L947.6 616.8L950.2 614.2Q951 617 949 619.2Q946.8 621 943.8 620Z" fill="#6a6a6a"/>
<circle cx="947.2" cy="624" r="5.6" fill="#6a6a6a" stroke="#fafafa" stroke-width="1"/>
<path d="M944.2 624H950.2M947.2 621V627" stroke="#fff" stroke-width="1.6"/>
</svg>
<div class="a" style="left:935px;top:130px;font-size:12px;color:#a3a3a3;white-space:nowrap">Инструмент</div>
<div class="lbl" style="top:177px">Создат</div>
<div class="lbl" style="top:216px">Объед</div>
<div class="lbl" style="top:256px">Редакт</div>
<div class="lbl" style="top:295px;letter-spacing:0">Adobe</div>
<div class="lbl" style="top:335px">Заполн</div>
<div class="lbl" style="top:374px">Экспор</div>
<div class="lbl" style="top:414px">Систем</div>
<div class="lbl" style="top:454px">Отпра</div>
<div class="lbl" style="top:493px">Добав</div>
<div class="lbl" style="top:533px">Скани</div>
<div class="lbl" style="top:572px">Защит</div>
<div class="lbl" style="top:612px">Допол</div>

</body></html>
